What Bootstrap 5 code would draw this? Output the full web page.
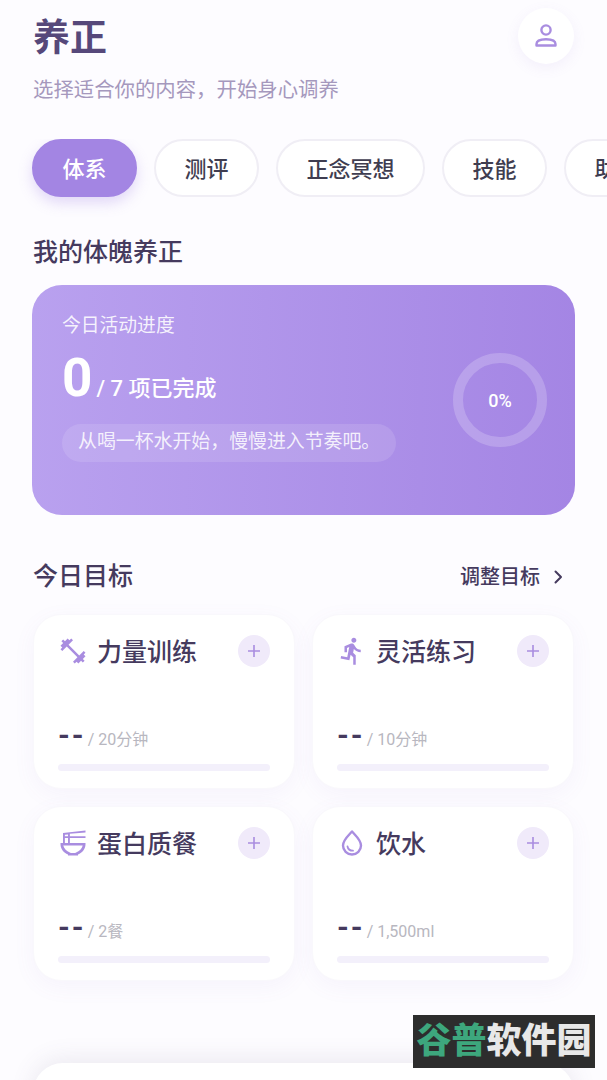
<!DOCTYPE html>
<html lang="zh-CN">
<head>
    <meta charset="UTF-8" />
    <meta name="viewport" content="width=device-width, initial-scale=1" />
    <title>养正</title>
    <link rel="stylesheet" href="https://cdn.jsdelivr.net/npm/bootstrap@5.3.0/dist/css/bootstrap.min.css"/>
    <style>
        html, body { height: 1080px; overflow: hidden; }
        body {
          font-family: Roboto, "Noto Sans CJK SC", sans-serif;
          background: #fdfcff;
          color: #453a5e;
          position: relative;
        }
        .page-wrap { padding: 8px 33px 0 33px; }
        .page-title { font-size: 37px; line-height: 56px; font-weight: 700; color: #56487a; margin: 3px 0 0; }
        .page-sub { font-size: 20.4px; line-height: 30px; color: #a598bd; margin: 8px 0 0; }
        .avatar-btn {
          width: 56px; height: 56px; background: #fff; flex: none;
          box-shadow: 0 4px 14px rgba(140, 110, 210, .09);
        }
        .chip-row { margin: 34px -33px 0 -33px; padding-left: 32px; gap: 17px; overflow: hidden; }
        .chip {
          height: 58px; padding: 3px 28.5px 0; font-size: 22px; font-weight: 500; color: #3f3d50;
          background: #fff; border: 2px solid #f0eef5; flex: none; white-space: nowrap;
        }
        .chip-on {
          background: #a385e3; color: #fff; border-color: #a385e3;
          box-shadow: 0 6px 14px rgba(163, 133, 227, .3);
        }
        .chip-wrap { padding-bottom: 38px; }
        .sect-title { font-size: 25px; line-height: 36px; font-weight: 500; color: #453a5e; margin: 0; }
        .hero-box {
          margin: 14px -1px 0 -1px; height: 230px; padding: 27px 28px 0 30px; border-radius: 30px;
          background: linear-gradient(91deg, #b9a1ef 0%, #a485e4 100%); color: #fff;
        }
        .hero-label { font-size: 18.8px; line-height: 28px; color: rgba(255, 255, 255, .88); }
        .hero-count { font-size: 53px; line-height: 62px; font-weight: 700; margin-top: 7px; }
        .hero-of { font-size: 22px; font-weight: 500; margin-left: 4px; }
        .hero-tip {
          display: inline-block; margin-top: 4px; height: 38px; line-height: 36px; padding: 0 16px;
          font-size: 18.9px; color: rgba(255, 255, 255, .85); background: rgba(255, 255, 255, .12);
        }
        .ring-box { width: 94px; height: 94px; flex: none; margin-top: 41px; }
        .ring-text { font-size: 18px; font-weight: 500; }
        .goal-head { margin: 44px 0 0; height: 36px; }
        .goal-link { font-size: 20px; font-weight: 500; color: #453a5e; gap: 10px; margin-right: 8px; }
        .goal-grid { --bs-gutter-x: 17px; --bs-gutter-y: 17px; margin-top: 2px; }
        .goal-item {
          height: 175px; padding: 19px 24px 0 24px; background: #fff; border-radius: 28px;
          border: 1px solid #f9f8fc; box-shadow: 0 6px 22px rgba(140, 110, 210, .06);
        }
        .goal-icon { width: 30px; height: 30px; flex: none; color: #a98de0; }
        .goal-name { font-size: 25px; line-height: 30px; padding-top: 4px; font-weight: 500; margin-left: 9px; color: #453a5e; }
        .plus-btn { width: 32px; height: 32px; background: #f0eafa; flex: none; }
        .goal-figure { margin-top: 49px; height: 36px; }
        .goal-dash { font-size: 30px; font-weight: 700; line-height: 36px; letter-spacing: 2px; color: #453a5e; }
        .goal-target { font-size: 16px; color: #b8b7c0; margin-left: 2px; }
        .goal-bar { height: 7px; margin-top: 11px; background: #f3f0fb; border-radius: 4px; }
        .next-box {
          margin: 82px 0 0; height: 200px; background: #fff; border-radius: 30px;
          box-shadow: 0 -4px 24px rgba(90, 80, 120, .11);
        }
        .corner-mark {
          position: absolute; left: 413px; top: 1015px; width: 182px; height: 53px;
          background: #2d2d2d; font-size: 35px; line-height: 53px; font-weight: 900; text-align: center;
          color: #e8e8e8; white-space: nowrap;
        }
        .corner-mark span { color: #3da77d; }
    </style>
</head>
<body>
<div class="page-wrap">
    <div class="d-flex justify-content-between align-items-start">
        <div>
            <h1 class="page-title">养正</h1>
            <p class="page-sub">选择适合你的内容，开始身心调养</p>
        </div>
        <div class="avatar-btn rounded-circle d-flex align-items-center justify-content-center">
            <svg width="28" height="28" viewBox="0 0 28 28" fill="none" stroke="#a98de0" stroke-width="2.4">
                <circle cx="14" cy="8" r="4.6"/>
                <path d="M4.5 23.5v-1.5c0-3 3.5-4.8 9.5-4.8s9.5 1.8 9.5 4.8v1.500z" stroke-linejoin="round"/>
            </svg>
        </div>
    </div>

    <div class="chip-row d-flex chip-wrap">
        <div class="chip chip-on rounded-pill d-flex align-items-center">体系</div>
        <div class="chip rounded-pill d-flex align-items-center">测评</div>
        <div class="chip rounded-pill d-flex align-items-center">正念冥想</div>
        <div class="chip rounded-pill d-flex align-items-center">技能</div>
        <div class="chip rounded-pill d-flex align-items-center">助眠</div>
    </div>

    <h2 class="sect-title">我的体魄养正</h2>

    <div class="hero-box d-flex justify-content-between">
        <div>
            <div class="hero-label">今日活动进度</div>
            <div class="hero-count">0<span class="hero-of">/ 7 项已完成</span></div>
            <div class="hero-tip rounded-pill">从喝一杯水开始，慢慢进入节奏吧。</div>
        </div>
        <div class="ring-box position-relative d-flex align-items-center justify-content-center">
            <svg class="position-absolute top-0 start-0" width="94" height="94" viewBox="0 0 94 94" fill="none">
                <circle cx="47" cy="47" r="42" stroke="#fff" stroke-opacity=".2" stroke-width="10"/>
            </svg>
            <span class="ring-text">0%</span>
        </div>
    </div>

    <div class="goal-head d-flex justify-content-between align-items-center">
        <h2 class="sect-title">今日目标</h2>
        <div class="goal-link d-flex align-items-center">调整目标
            <svg width="16" height="16" viewBox="0 0 16 16" fill="none" stroke="#453a5e" stroke-width="2" stroke-linecap="round" stroke-linejoin="round"><path d="M5.500 2.500 11 8l-5.500 5.500"/></svg>
        </div>
    </div>

    <div class="row goal-grid">
        <div class="col-6">
            <div class="goal-item">
                <div class="d-flex align-items-center">
                    <svg class="goal-icon" viewBox="0 0 24 24" fill="currentColor"><path d="M20.570 14.860 22 13.430 20.570 12 17 15.570 8.430 7 12 3.430 10.570 2 9.140 3.430 7.710 2 5.570 4.140 4.140 2.710 2.710 4.140l1.430 1.430L2 7.710l1.430 1.430L2 10.570 3.430 12 7 8.430 15.570 17 12 20.570 13.430 22l1.430-1.430L16.290 22l2.140-2.140 1.430 1.430 1.430-1.430-1.430-1.430L22 16.290z"/></svg>
                    <span class="goal-name flex-grow-1">力量训练</span>
                    <div class="plus-btn rounded-circle d-flex align-items-center justify-content-center">
                        <svg width="14" height="14" viewBox="0 0 14 14" stroke="#a98de0" stroke-width="1.600"><path d="M7 1v12M1 7h12"/></svg>
                    </div>
                </div>
                <div class="goal-figure d-flex align-items-baseline"><span class="goal-dash">--</span><span class="goal-target">/ 20分钟</span></div>
                <div class="goal-bar"></div>
            </div>
        </div>
        <div class="col-6">
            <div class="goal-item">
                <div class="d-flex align-items-center">
                    <svg class="goal-icon" viewBox="0 0 24 24" fill="currentColor"><path d="M13.490 5.480c1.100 0 2-.9 2-2s-.9-2-2-2-2 .9-2 2 .9 2 2 2zm-3.600 13.900 1-4.400 2.100 2v6h2v-7.500l-2.100-2 .6-3c1.300 1.500 3.300 2.500 5.500 2.500v-2c-1.900 0-3.500-1-4.300-2.400l-1-1.600c-.4-.6-1-1-1.700-1-.3 0-.5.1-.8.1l-5.200 2.200v4.700h2v-3.400l1.800-.7-1.600 8.100-4.900-1-.4 2 7 1.400z"/></svg>
                    <span class="goal-name flex-grow-1">灵活练习</span>
                    <div class="plus-btn rounded-circle d-flex align-items-center justify-content-center">
                        <svg width="14" height="14" viewBox="0 0 14 14" stroke="#a98de0" stroke-width="1.600"><path d="M7 1v12M1 7h12"/></svg>
                    </div>
                </div>
                <div class="goal-figure d-flex align-items-baseline"><span class="goal-dash">--</span><span class="goal-target">/ 10分钟</span></div>
                <div class="goal-bar"></div>
            </div>
        </div>
        <div class="col-6">
            <div class="goal-item">
                <div class="d-flex align-items-center">
                    <svg class="goal-icon" viewBox="0 0 24 24" fill="currentColor" fill-rule="evenodd"><path d="M22 3.510V2L4 3.990V12H2v1c0 3.690 2.470 6.860 6 8.250V22h8v-.75c3.530-1.390 6-4.560 6-8.250v-1H9.500V8H22V6.500H9.500V4.680zM8 5.100V6.500H5.500V5.380zM5.500 8H8v4H5.500zM19.790 14c-.66 2.500-2.660 4.630-5.290 5.670l-.5.200V20h-4v-.130l-.5-.200C6.870 18.630 4.870 16.500 4.210 14z"/></svg>
                    <span class="goal-name flex-grow-1">蛋白质餐</span>
                    <div class="plus-btn rounded-circle d-flex align-items-center justify-content-center">
                        <svg width="14" height="14" viewBox="0 0 14 14" stroke="#a98de0" stroke-width="1.600"><path d="M7 1v12M1 7h12"/></svg>
                    </div>
                </div>
                <div class="goal-figure d-flex align-items-baseline"><span class="goal-dash">--</span><span class="goal-target">/ 2餐</span></div>
                <div class="goal-bar"></div>
            </div>
        </div>
        <div class="col-6">
            <div class="goal-item">
                <div class="d-flex align-items-center">
                    <svg class="goal-icon" viewBox="0 0 30 30" fill="none" stroke="currentColor" stroke-width="2.400" stroke-linecap="round"><path d="M15 3.500c4 4.500 9 8.500 9 14a9 9 0 0 1-18 0c0-5.500 5-9.500 9-14z" stroke-linejoin="round"/><path d="M10.500 18.500c.5 2.800 2.600 4.200 5.500 4.200" stroke-width="1.800"/></svg>
                    <span class="goal-name flex-grow-1">饮水</span>
                    <div class="plus-btn rounded-circle d-flex align-items-center justify-content-center">
                        <svg width="14" height="14" viewBox="0 0 14 14" stroke="#a98de0" stroke-width="1.600"><path d="M7 1v12M1 7h12"/></svg>
                    </div>
                </div>
                <div class="goal-figure d-flex align-items-baseline"><span class="goal-dash">--</span><span class="goal-target">/ 1,500ml</span></div>
                <div class="goal-bar"></div>
            </div>
        </div>
    </div>

    <div class="next-box"></div>
</div>

<div class="corner-mark"><span>谷普</span>软件园</div>

<script src="https://cdn.jsdelivr.net/npm/bootstrap@5.3.0/dist/js/bootstrap.bundle.min.js"></script>
</body>
</html>
